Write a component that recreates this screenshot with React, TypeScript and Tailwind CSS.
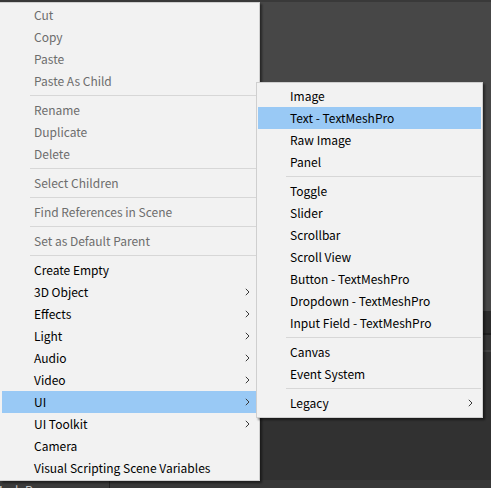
import React from "react";

type Item = { t: string; d?: boolean; sub?: boolean; hl?: boolean } | "sep";

const leftItems: Item[] = [
  { t: "Cut", d: true },
  { t: "Copy", d: true },
  { t: "Paste", d: true },
  { t: "Paste As Child", d: true },
  "sep",
  { t: "Rename", d: true },
  { t: "Duplicate", d: true },
  { t: "Delete", d: true },
  "sep",
  { t: "Select Children", d: true },
  "sep",
  { t: "Find References in Scene", d: true },
  "sep",
  { t: "Set as Default Parent", d: true },
  "sep",
  { t: "Create Empty" },
  { t: "3D Object", sub: true },
  { t: "Effects", sub: true },
  { t: "Light", sub: true },
  { t: "Audio", sub: true },
  { t: "Video", sub: true },
  { t: "UI", sub: true, hl: true },
  { t: "UI Toolkit", sub: true },
  { t: "Camera" },
  { t: "Visual Scripting Scene Variables" },
];

const subItems: Item[] = [
  { t: "Image" },
  { t: "Text - TextMeshPro", hl: true },
  { t: "Raw Image" },
  { t: "Panel" },
  "sep",
  { t: "Toggle" },
  { t: "Slider" },
  { t: "Scrollbar" },
  { t: "Scroll View" },
  { t: "Button - TextMeshPro" },
  { t: "Dropdown - TextMeshPro" },
  { t: "Input Field - TextMeshPro" },
  "sep",
  { t: "Canvas" },
  { t: "Event System" },
  "sep",
  { t: "Legacy", sub: true },
];

const Chevron = () => (
  <svg width="5" height="8" viewBox="0 0 5 8" className="shrink-0">
    <path d="M0.8 0.8 L4 4 L0.8 7.2" stroke="#3a3a3a" strokeWidth="1" fill="none" />
  </svg>
);

function MenuList({ items, chevronPad }: { items: Item[]; chevronPad: string }) {
  return (
    <>
      {items.map((it, i) =>
        it === "sep" ? (
          <div key={i} className="h-[7px] flex items-center pl-[28px]">
            <div className="h-px w-full bg-[#d7d7d7]" />
          </div>
        ) : (
          <div
            key={i}
            className={`h-[22px] flex items-center pl-[32px] ${chevronPad} ${
              it.hl ? "bg-[#99c9f5]" : ""
            } ${it.d ? "text-[#6d6d6d]" : "text-black"}`}
          >
            <span className="flex-1 whitespace-nowrap">{it.t}</span>
            {it.sub && <Chevron />}
          </div>
        )
      )}
    </>
  );
}

export default function App() {
  return (
    <div
      className="relative w-[491px] h-[488px] overflow-hidden bg-[#474747] flex flex-col"
      style={{ fontFamily: '"Noto Sans CJK KR", "Noto Sans", sans-serif' }}
    >
      {/* background editor layers */}
      <div className="h-[2px] bg-[#393939] shrink-0" />
      <div className="h-[309px] bg-[#474747] shrink-0" />
      <div className="h-[22px] bg-[#2c2c2c] shrink-0" />
      <div className="h-[2px] bg-[#1f1f1f] shrink-0" />
      <div className="h-[15px] bg-[#353535] shrink-0" />
      <div className="h-[2px] bg-[#424242] shrink-0" />
      <div className="flex-1 bg-[#313131] flex flex-col justify-end">
        <div className="h-[8px] flex bg-[#3a3a3a]">
          <div className="w-[110px] border-r border-[#222] text-[12px] leading-[12px] text-[#c4c4c4] pl-[1px] pt-[4px] overflow-hidden whitespace-nowrap">
            <span className="ml-[-8px]">Mesh Pro</span>
          </div>
          <div className="flex-1 bg-[#383838]" />
        </div>
      </div>

      {/* main context menu */}
      <div className="absolute left-0 top-[2px] w-[260px] bg-[#f2f2f2] border border-l-0 border-[#cfcfcf] pt-[1px] pb-[1px] pl-[2px] pr-[3px] text-[12px] shadow-[2px_2px_2px_rgba(0,0,0,0.45)]">
        <MenuList items={leftItems} chevronPad="pr-[6px]" />
      </div>

      {/* UI submenu */}
      <div className="absolute left-[256px] top-[82px] w-[227px] bg-[#f2f2f2] border border-[#cfcfcf] pt-[2px] pb-[3px] px-px text-[12px] shadow-[2px_2px_2px_rgba(0,0,0,0.45)]">
        <MenuList items={subItems} chevronPad="pr-[8px]" />
      </div>
    </div>
  );
}
